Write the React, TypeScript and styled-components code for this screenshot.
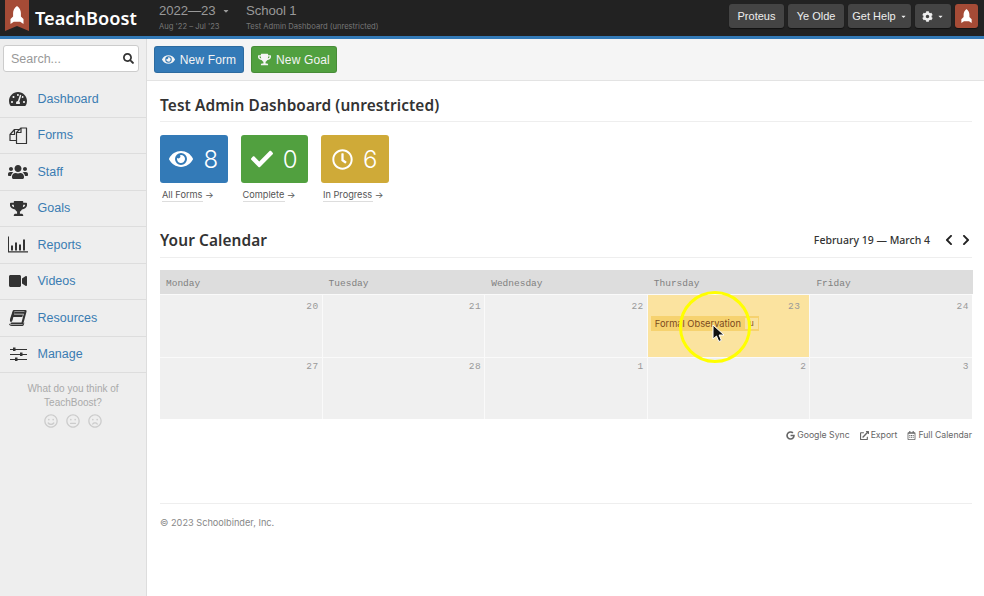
import React from "react";
import styled, { createGlobalStyle } from "styled-components";
import {
  FaTachometerAlt, FaUsers, FaTrophy, FaVideo,
  FaRegSmile, FaRegMeh, FaRegFrown, FaEye, FaCheck, FaRegClock, FaChevronLeft,
  FaChevronRight, FaGoogle, FaExternalLinkAlt, FaRegCalendarAlt, FaCog, FaSearch, FaCaretDown,
} from "react-icons/fa";

const Global = createGlobalStyle`
  html, body { margin: 0; padding: 0; background: #fff; }
  body { font-family: "Liberation Sans", Arial, sans-serif; }
  * { box-sizing: border-box; }
`;

const Page = styled.div`
  width: 984px; height: 596px; overflow: hidden; display: flex; flex-direction: column; position: relative;
`;
const TopBar = styled.header`
  height: 39px; flex: none; background: #222; border-bottom: 3px solid #337ab7;
  display: flex; align-items: flex-start; padding: 0 6px 0 5px;
`;
const Banner = styled.svg`width: 24px; height: 31px; flex: none;`;
const Brand = styled.div`
  font-family: "Noto Sans", sans-serif; font-weight: 600; font-size: 18.2px; line-height: 36px; color: #fff;
  margin-left: 6px; width: 124px;
`;
const HeadBlock = styled.div<{ $w: number }>`
  width: ${(p) => p.$w}px; flex: none; padding-top: 3px;
`;
const HeadMain = styled.div`
  font-size: 13.2px; line-height: 16px; color: #999; display: flex; align-items: center; letter-spacing: -0.1px;
  svg { font-size: 8px; margin-left: 6px; }
`;
const HeadSub = styled.div`
  font-family: "Inter", sans-serif; font-size: 7.6px; line-height: 11px; margin-top: 2px; color: #777; white-space: nowrap;
`;
const TopActions = styled.div`margin-left: auto; display: flex; gap: 4px; padding-top: 4px;`;
const TopButton = styled.div<{ $w: number; $accent?: boolean }>`
  width: ${(p) => p.$w}px; height: 24px; border-radius: 3px;
  background: ${(p) => (p.$accent ? "#a54b36" : "#444")};
  color: #eee; font-size: 11px; display: flex; align-items: center; justify-content: center; gap: 4px;
  box-shadow: 0 1px 1px rgba(0,0,0,.5);
  svg.caret { font-size: 7px; }
`;
const Body = styled.div`flex: 1; display: flex; min-height: 0;`;
const Sidebar = styled.aside`
  width: 147px; flex: none; background: #eee; border-right: 1px solid #ddd; padding-top: 6px;
`;
const SearchBox = styled.div`
  margin: 0 7px 0 3px; height: 27px; background: #fff; border: 1px solid #ccc; border-radius: 3px;
  display: flex; align-items: center; justify-content: space-between; padding: 0 4px 0 7px;
  color: #999; font-size: 12.5px; svg { color: #333; font-size: 11px; }
`;
const Nav = styled.nav`margin-top: 8px; border-top: 1px solid transparent;`;
const NavRow = styled.div`
  height: 36.5px; display: flex; align-items: center; border-bottom: 1px solid #ddd;
  font-size: 12.5px; color: #3a7cb2;
`;
const NavIcon = styled.span<{ $size: number }>`
  width: 37.5px; flex: none; display: flex; justify-content: center; color: #333; font-size: ${(p) => p.$size}px;
  padding-right: 1.500px;
`;
const Feedback = styled.div`
  text-align: center; color: #aaa; font-size: 10px; line-height: 14px; padding: 9px 20px 0 20px;
`;
const Faces = styled.div`
  display: flex; justify-content: center; gap: 8px; margin-top: 4px; font-size: 14px; color: #ccc;
`;
const Main = styled.main`flex: 1; min-width: 0;`;
const Toolbar = styled.div`
  height: 42px; background: #f5f5f5; border-bottom: 1px solid #e3e3e3; padding: 7px 0 0 7px; display: flex; gap: 7px;
`;
const ActionButton = styled.div<{ $bg: string; $w: number }>`
  width: ${(p) => p.$w}px; height: 27px; border-radius: 3px; background: ${(p) => p.$bg}; color: #f4f4f4;
  border: 1px solid rgba(0,0,0,.12);
  font-size: 12px; letter-spacing: 0.15px; display: flex; align-items: center; justify-content: center; gap: 5px;
  svg { font-size: 13px; }
`;
const Content = styled.div`padding: 0 12px 0 13px;`;
const SectionHead = styled.div<{ $top: number; $pad: number }>`
  margin-top: ${(p) => p.$top}px; height: 33px; border-bottom: 1px solid #eee; display: flex; justify-content: space-between; align-items: center; padding-bottom: ${(p) => p.$pad}px;
`;
const Title = styled.h2`
  margin: 0; font-family: "Noto Sans", sans-serif; font-weight: 600; font-size: 15.4px; color: #333; letter-spacing: 0.1px;
`;
const RangeNav = styled.div`
  display: flex; align-items: center; font-family: "Noto Sans", sans-serif; font-weight: 500; font-size: 10.5px; color: #333;
  svg { font-size: 12px; margin-left: 5px; color: #222; }
  svg:first-of-type { margin-left: 13px; }
`;
const Stats = styled.div`display: flex; gap: 13px; margin-top: 13px;`;
const StatCol = styled.div`width: 67.5px; font-family: "Inter", sans-serif;`;
const StatTile = styled.div<{ $bg: string }>`
  height: 48px; border-radius: 3px; background: ${(p) => p.$bg}; color: #fff; display: flex; align-items: center; justify-content: center; gap: 10px;
  font-size: 24px; font-family: "Inter", sans-serif; font-weight: 300;
`;
const StatLink = styled.span`
  display: block; width: fit-content; margin: 5px 0 0 2px; font-size: 9.2px; line-height: 13px; color: #555; white-space: nowrap;
  background: linear-gradient(#ddd, #ddd) 0 100% / calc(100% - 11px) 1px no-repeat; padding-bottom: 1px;
`;
const Calendar = styled.div`
  margin-top: 12px; display: grid; grid-template-columns: repeat(5, 1fr); grid-template-rows: 24px 62px 61px; gap: 1px; background: #fafafa;
  font-family: "Liberation Mono", monospace; font-size: 9.500px;
`;
const DayName = styled.div`background: #ddd; color: #808080; padding: 8px 0 0 6px; margin-right: -1px;`;
const Cell = styled.div<{ $active?: boolean; $top: number }>`
  background: ${(p) => (p.$active ? "#fbe39f" : "#f0f0f0")}; color: #999; text-align: right;
  padding: ${(p) => p.$top}px ${(p) => (p.$active ? 9 : 3)}px 0 3px;
  font-size: 9.5px; letter-spacing: 0.5px;
`;
const Event = styled.div`
  margin-top: 4px; height: 15px; width: 108px; background: #f6d26f; display: flex; align-items: center; justify-content: space-between;
  font-family: "Inter", sans-serif; font-size: 9.3px; letter-spacing: 0; color: #7b4a1e; padding: 0 1px 0 4px; text-align: left; white-space: nowrap;
`;
const EventTag = styled.span`background: #f9e2a0; width: 13px; height: 11px; font-size: 8px; line-height: 11px; text-align: center;`;
const Links = styled.div`
  display: flex; justify-content: flex-end; gap: 10px; margin-top: 11px; font-family: "Inter", sans-serif; font-size: 8.7px; color: #666;
`;
const LinkItem = styled.span`
  display: flex; align-items: center; gap: 2px; svg { font-size: 9px; }
`;
const Footer = styled.footer`
  margin-top: 63px; border-top: 1px solid #eee; padding-top: 13px; font-family: "Inter", sans-serif; font-size: 9.2px; color: #888;
`;
const Ring = styled.div`
  position: absolute; left: 679px; top: 291px; width: 72px; height: 72px; border-radius: 50%; border: 3px solid #ffff00; pointer-events: none;
`;
const Cursor = styled.svg`position: absolute; left: 712px; top: 324px; width: 13px; height: 19px;`;

const Rocket = ({ size }: { size: number }) => (
  <svg width={size} height={size} viewBox="0 0 16 16" fill="#fff">
    <path d="M8 0c2 1.500 3.100 3.600 3.100 6v2.600l2.400 2.400V15l-2.800-1.900H5.300L2.500 15v-4l2.400-2.400V6C4.900 3.600 6 1.500 8 0z" />
  </svg>
);
const ChartIcon = () => (
  <svg width="20" height="17" viewBox="0 0 20 16" fill="#333">
    <path d="M0 0h1v14.800h19V16H0z" />
    <path d="M3 9h2v5H3zM7 6h2v8H7zM11 8h2v6h-2zM15 3h2v11h-2z" />
  </svg>
);
const FormsIcon = () => (
  <svg width="19" height="19" viewBox="0 0 19 19" fill="none" stroke="#333" strokeWidth="1.2" strokeLinejoin="round">
    <path d="M1 8.500 5.500 3.500h5.500v11H1z" fill="#eee" />
    <path d="M1 8.500h4.500v-5" />
    <path d="M7.500 6.500 12 2h5.500v15.500h-10z" fill="#eee" />
    <path d="M7.500 6.500H12V2" />
  </svg>
);
const BookIcon = () => (
  <svg width="18" height="16" viewBox="0 0 18 16" fill="#333">
    <path d="M5 0h11.500c1 0 1.300.8 1 1.700L14.500 13c-.3.900-.9 1.300-1.800 1.300H2.800c-.9 0-1.300-.4-1.300-.9s.4-.9 1-.9h10l3-11.500H5.500L3 11c-.6.100-1.300.300-1.900.8C.8 10.500 1 9 1.500 7.500L3.500 1.500C3.800.500 4.200 0 5 0z" />
    <path d="M0 13.500C0 15 1 16 2.800 16h10c1 0 1.800-.6 2.100-1.600l.5-1.900-1 .8c-.3.900-.9 1.500-1.800 1.500H2.800C1.800 14.800 1 14.500 0 13.500z" />
    <path d="M4.200 4.500 14 4.500 13.300 7 3.500 7zM6 1.500h9.800L15 3.700H5.200z" />
    <path d="M3.700 2 6 1.500 3 11.500 1.500 12z" />
  </svg>
);
const SlidersIcon = () => (
  <svg width="17" height="15" viewBox="0 0 17 15" fill="#333">
    <path d="M0 2h17v1H0zM0 7h17v1H0zM0 12h17v1H0z" />
    <path d="M3 .5h2.500v3.500H3zM10 5.500h2.500V9H10zM5 10.500h2.500V14H5z" />
  </svg>
);

const navItems: [React.ReactNode, string, number][] = [
  [<FaTachometerAlt />, "Dashboard", 18],
  [<FormsIcon />, "Forms", 18],
  [<FaUsers />, "Staff", 20],
  [<FaTrophy />, "Goals", 17],
  [<ChartIcon />, "Reports", 18],
  [<FaVideo />, "Videos", 18],
  [<BookIcon />, "Resources", 18],
  [<SlidersIcon />, "Manage", 18],
];
const stats: [string, React.ReactNode, string, string][] = [
  ["#337ab7", <FaEye size={24} />, "8", "All Forms →"],
  ["#51a03f", <FaCheck size={22} />, "0", "Complete →"],
  ["#cfaa38", <FaRegClock size={21} />, "6", "In Progress →"],
];
const days = ["Monday", "Tuesday", "Wednesday", "Thursday", "Friday"];
const week1 = ["20", "21", "22", "23", "24"];
const week2 = ["27", "28", "1", "2", "3"];

export default function App() {
  return (
    <Page>
      <Global />
      <TopBar>
        <Banner viewBox="0 0 24 31">
          <path d="M0 0h24v31l-12-5-12 5z" fill="#a54b36" />
          <path d="M12 6c2.700 2 3.900 4.500 3.900 7v3.500l2.600 2.600V24l-3.300-2.200H8.800L5.500 24v-4.900l2.600-2.600V13c0-2.500 1.200-5 3.900-7z" fill="#fff" />
        </Banner>
        <Brand>TeachBoost</Brand>
        <HeadBlock $w={87}>
          <HeadMain>2022—23<FaCaretDown /></HeadMain>
          <HeadSub>Aug '22 – Jul '23</HeadSub>
        </HeadBlock>
        <HeadBlock $w={200}>
          <HeadMain>School 1</HeadMain>
          <HeadSub>Test Admin Dashboard (unrestricted)</HeadSub>
        </HeadBlock>
        <TopActions>
          <TopButton $w={55}>Proteus</TopButton>
          <TopButton $w={56}>Ye Olde</TopButton>
          <TopButton $w={63}>Get Help<FaCaretDown className="caret" /></TopButton>
          <TopButton $w={36}><FaCog /><FaCaretDown className="caret" /></TopButton>
          <TopButton $w={23} $accent><Rocket size={15} /></TopButton>
        </TopActions>
      </TopBar>
      <Body>
        <Sidebar>
          <SearchBox>Search...<FaSearch /></SearchBox>
          <Nav>
            {navItems.map(([icon, label, size]) => (
              <NavRow key={label}><NavIcon $size={size}>{icon}</NavIcon>{label}</NavRow>
            ))}
          </Nav>
          <Feedback>
            What do you think of TeachBoost?
            <Faces><FaRegSmile /><FaRegMeh /><FaRegFrown /></Faces>
          </Feedback>
        </Sidebar>
        <Main>
          <Toolbar>
            <ActionButton $bg="#337ab7" $w={90}><FaEye />New Form</ActionButton>
            <ActionButton $bg="#51a03f" $w={86}><FaTrophy />New Goal</ActionButton>
          </Toolbar>
          <Content>
            <SectionHead $top={8} $pad={0}><Title>Test Admin Dashboard (unrestricted)</Title></SectionHead>
            <Stats>
              {stats.map(([bg, icon, n, label]) => (
                <StatCol key={label}>
                  <StatTile $bg={bg}>{icon}{n}</StatTile>
                  <StatLink>{label}</StatLink>
                </StatCol>
              ))}
            </Stats>
            <SectionHead $top={23} $pad={2}>
              <Title>Your Calendar</Title>
              <RangeNav>February 19 — March 4<FaChevronLeft /><FaChevronRight /></RangeNav>
            </SectionHead>
            <Calendar>
              {days.map((d) => <DayName key={d}>{d}</DayName>)}
              {week1.map((d) => (
                <Cell key={d} $top={6} $active={d === "23"}>
                  {d}
                  {d === "23" && <Event>Formal Observation<EventTag>u</EventTag></Event>}
                </Cell>
              ))}
              {week2.map((d) => <Cell key={d} $top={3}>{d}</Cell>)}
            </Calendar>
            <Links>
              <LinkItem><FaGoogle />Google Sync</LinkItem>
              <LinkItem><FaExternalLinkAlt />Export</LinkItem>
              <LinkItem><FaRegCalendarAlt />Full Calendar</LinkItem>
            </Links>
            <Footer>© 2023 Schoolbinder, Inc.</Footer>
          </Content>
        </Main>
      </Body>
      <Ring />
      <Cursor viewBox="0 0 13 19">
        <path d="M1 1v14l3.500-3 2.300 5.500 2.600-1.100L7.100 11H12z" fill="#111" stroke="#fff" strokeWidth="1" />
      </Cursor>
    </Page>
  );
}
